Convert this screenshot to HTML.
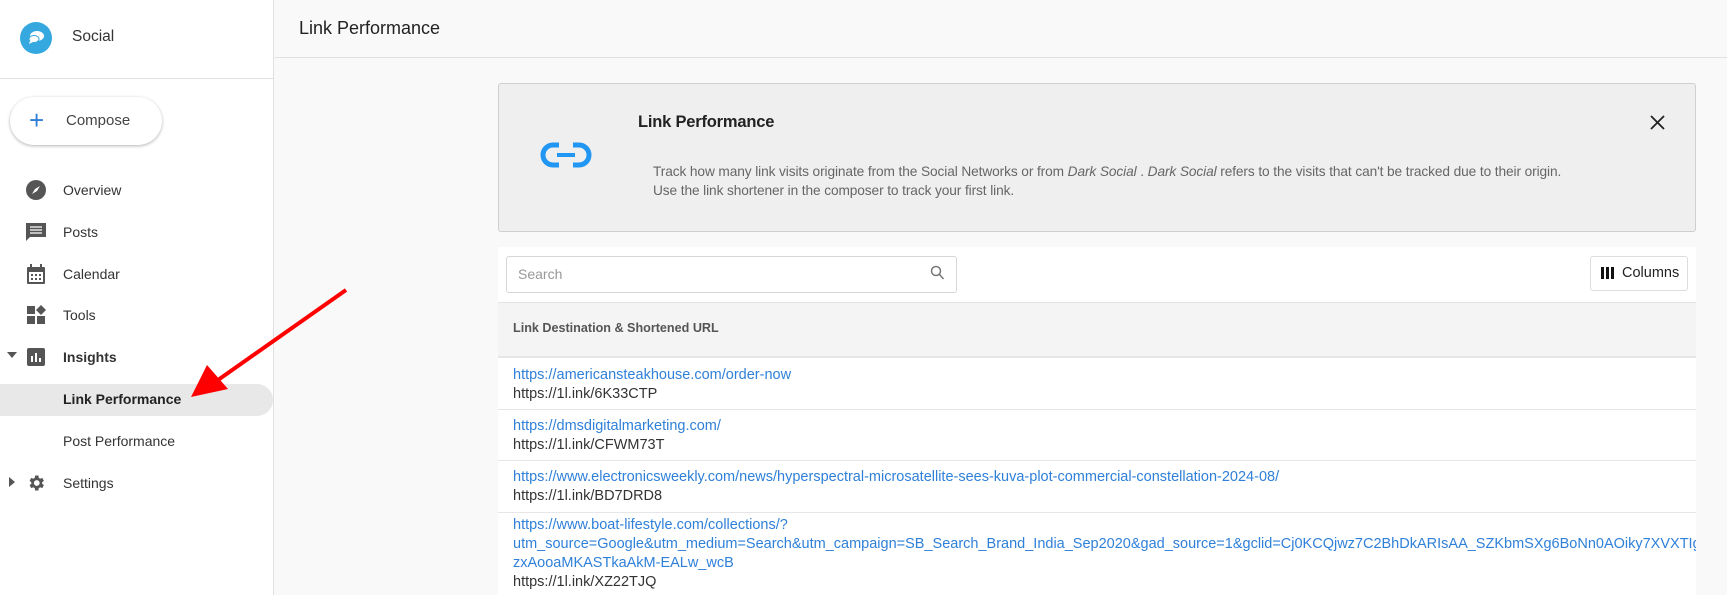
<!DOCTYPE html>
<html><head><meta charset="utf-8"><style>
*{box-sizing:border-box;margin:0;padding:0}
body{width:1727px;height:595px;overflow:hidden;background:#f9f9f9;font-family:"Liberation Sans",Arial,sans-serif;position:relative;color:#333}
.side{position:absolute;left:0;top:0;width:274px;height:595px;background:#fff;border-right:1px solid #e0e0e0}
.abs{position:absolute}
.nav{position:absolute;left:63px;font-size:14px;color:#333}
.ic{position:absolute;left:26px;width:20px;height:20px}
.link{color:#2f80d9}
.row{position:absolute;left:498px;width:1198px;background:#fff;border-top:1px solid #e6e6e6;padding-left:15px;font-size:14.5px;line-height:19px}
</style></head><body>
<div class="side">
  <div class="abs" style="left:20px;top:22px;width:32px;height:32px;border-radius:50%;background:#35a8e0"></div>
  <svg class="abs" style="left:26px;top:29px" width="20" height="18" viewBox="0 0 20 18"><ellipse cx="11" cy="7" rx="7" ry="5" fill="#fff"/><ellipse cx="8" cy="10" rx="5" ry="3.5" fill="#fff" stroke="#35a8e0" stroke-width="1"/><path d="M4 12 L3 15 L7 13Z" fill="#fff"/></svg>
  <div class="abs" style="left:72px;top:28px;font-size:15.5px;color:#333">Social</div>
  <div class="abs" style="left:0;top:78px;width:274px;height:1px;background:#e0e0e0"></div>
  <div class="abs" style="left:10px;top:97px;width:152px;height:48px;border-radius:24px;background:#fff;box-shadow:0 1px 3px rgba(0,0,0,.3)"></div>
  <div class="abs" style="left:29px;top:105px;font-size:26px;color:#2f7fd6;font-weight:300;line-height:30px">+</div>
  <div class="abs" style="left:66px;top:112px;font-size:15px;color:#444">Compose</div>

  <svg class="ic" style="top:180px" viewBox="0 0 20 20"><circle cx="10" cy="10" r="10" fill="#555"/><path d="M14 6 L11 11 L9 9Z M6 14 L9 9 L11 11Z" fill="#fff"/></svg>
  <div class="nav" style="top:182px">Overview</div>
  <svg class="ic" style="top:222px" viewBox="0 0 20 20"><path d="M0 1h20v14H4l-4 4z" fill="#555"/><path d="M4 5h12M4 8h12M4 11h12" stroke="#fff" stroke-width="1.3"/></svg>
  <div class="nav" style="top:224px">Posts</div>
  <svg class="ic" style="top:264px" viewBox="0 0 20 20"><rect x="1" y="3" width="18" height="17" rx="1" fill="#555"/><rect x="3" y="8" width="14" height="10" fill="#fff"/><path d="M5 0v5M15 0v5" stroke="#555" stroke-width="2"/><g fill="#555"><rect x="5" y="10" width="2" height="2"/><rect x="9" y="10" width="2" height="2"/><rect x="13" y="10" width="2" height="2"/><rect x="5" y="14" width="2" height="2"/><rect x="9" y="14" width="2" height="2"/><rect x="13" y="14" width="2" height="2"/></g></svg>
  <div class="nav" style="top:266px">Calendar</div>
  <svg class="ic" style="top:305px" viewBox="0 0 20 20"><g fill="#555"><rect x="1" y="1" width="8" height="8"/><rect x="1" y="11" width="8" height="8"/><rect x="11" y="11" width="8" height="8"/><path d="M15 0l5 5-5 5-5-5z"/></g></svg>
  <div class="nav" style="top:307px">Tools</div>
  <svg class="abs" style="left:7px;top:352px" width="10" height="6"><path d="M0 0h10L5 6z" fill="#555"/></svg>
  <svg class="ic" style="top:347px" viewBox="0 0 20 20"><rect x="1" y="1" width="18" height="18" rx="2" fill="#555"/><path d="M6 9v6M10 6v9M14 11v4" stroke="#fff" stroke-width="2"/></svg>
  <div class="nav" style="top:349px;font-weight:bold">Insights</div>
  <div class="abs" style="left:0;top:384px;width:273px;height:32px;background:#e8e8e8;border-radius:0 16px 16px 0"></div>
  <div class="nav" style="top:391px;font-weight:bold;color:#222">Link Performance</div>
  <div class="nav" style="top:433px">Post Performance</div>
  <svg class="abs" style="left:9px;top:477px" width="6" height="10"><path d="M0 0v10l6-5z" fill="#555"/></svg>
  <svg class="ic" style="top:473px" viewBox="0 0 24 24"><path fill="#555" d="M19.4 13a7.5 7.5 0 0 0 0-2l2.1-1.6-2-3.5-2.5 1a7 7 0 0 0-1.7-1L14.9 3h-4l-.4 2.9a7 7 0 0 0-1.7 1l-2.5-1-2 3.5L6.4 11a7.5 7.5 0 0 0 0 2l-2.1 1.6 2 3.5 2.5-1a7 7 0 0 0 1.7 1l.4 2.9h4l.4-2.9a7 7 0 0 0 1.7-1l2.5 1 2-3.5zM12.9 15.5a3.5 3.5 0 1 1 0-7 3.5 3.5 0 0 1 0 7z"/></svg>
  <div class="nav" style="top:475px">Settings</div>
</div>

<div class="abs" style="left:275px;top:0;width:1452px;height:58px;border-bottom:1px solid #e0e0e0;background:#f9f9f9"></div>
<div class="abs" style="left:299px;top:18px;font-size:18px;color:#222">Link Performance</div>

<div class="abs" style="left:498px;top:83px;width:1198px;height:149px;background:#efefef;border:1px solid #cfcfcf;border-radius:3px"></div>
<svg class="abs" style="left:539px;top:141px" width="54" height="28" viewBox="0 0 54 28"><path d="M20 4H14a10 10 0 0 0 0 20h6M34 4h6a10 10 0 0 1 0 20h-6" fill="none" stroke="#2196f3" stroke-width="5"/><path d="M18 14h18" stroke="#2196f3" stroke-width="4"/></svg>
<div class="abs" style="left:638px;top:113px;font-size:16.5px;font-weight:bold;color:#222;letter-spacing:-.2px">Link Performance</div>
<div class="abs" style="left:653px;top:162px;font-size:13.7px;color:#666;line-height:19px;letter-spacing:-.1px">Track how many link visits originate from the Social Networks or from <i>Dark Social</i> . <i>Dark Social</i> refers to the visits that can't be tracked due to their origin.<br>Use the link shortener in the composer to track your first link.</div>
<svg class="abs" style="left:1650px;top:115px" width="15" height="15"><path d="M1 1l13 13M14 1L1 14" stroke="#222" stroke-width="1.8"/></svg>

<div class="abs" style="left:498px;top:247px;width:1198px;height:56px;background:#fff"></div>
<div class="abs" style="left:506px;top:256px;width:451px;height:37px;border:1px solid #d6d6d6;border-radius:3px;background:#fff"></div>
<div class="abs" style="left:518px;top:266px;font-size:14px;color:#999">Search</div>
<svg class="abs" style="left:930px;top:265px" width="15" height="16"><circle cx="6" cy="6" r="4.5" fill="none" stroke="#777" stroke-width="1.5"/><path d="M9.5 9.5l4 4.5" stroke="#777" stroke-width="1.5"/></svg>
<div class="abs" style="left:1590px;top:256px;width:98px;height:35px;border:1px solid #ddd;border-radius:3px;background:#fff"></div>
<div class="abs" style="left:1601px;top:267px;width:13px;height:12px;background:linear-gradient(90deg,#111 0 3px,transparent 3px 5px,#111 5px 8px,transparent 8px 10px,#111 10px)"></div>
<div class="abs" style="left:1622px;top:265px;font-size:14.5px;color:#222">Columns</div>

<div class="abs" style="left:498px;top:302px;width:1198px;height:55px;background:#f4f4f4;border-top:1px solid #e3e3e3"></div>
<div class="abs" style="left:513px;top:321px;font-size:12.6px;font-weight:bold;color:#555">Link Destination &amp; Shortened URL</div>

<div class="row" style="top:356px;height:53px;padding-top:8px;border-top:2px solid #e6e6e6"><span class="link">https://americansteakhouse.com/order-now</span><br>https://1l.ink/6K33CTP</div>
<div class="row" style="top:409px;height:51px;padding-top:7px"><span class="link">https://dmsdigitalmarketing.com/</span><br>https://1l.ink/CFWM73T</div>
<div class="row" style="top:460px;height:52px;padding-top:7px"><span class="link">https://www.electronicsweekly.com/news/hyperspectral-microsatellite-sees-kuva-plot-commercial-constellation-2024-08/</span><br>https://1l.ink/BD7DRD8</div>
<div class="row" style="top:512px;height:83px;padding-top:3px;white-space:nowrap;overflow:hidden"><span class="link">https://www.boat-lifestyle.com/collections/?<br>utm_source=Google&amp;utm_medium=Search&amp;utm_campaign=SB_Search_Brand_India_Sep2020&amp;gad_source=1&amp;gclid=Cj0KCQjwz7C2BhDkARIsAA_SZKbmSXg6BoNn0AOiky7XVXTIgq<br>zxAooaMKASTkaAkM-EALw_wcB</span><br>https://1l.ink/XZ22TJQ</div>

<svg class="abs" style="left:0;top:0" width="1727" height="595"><path d="M346 290L218 380" stroke="#f00" stroke-width="4"/><path d="M191 397L207 365L228 389Z" fill="#f00"/></svg>
</body></html>
